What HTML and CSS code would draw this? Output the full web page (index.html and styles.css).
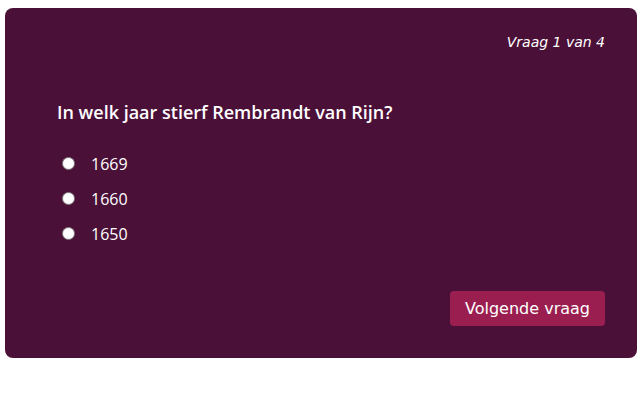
FILE: index.html
```html
<!DOCTYPE html>
<html lang="nl">
<head>
	<meta charset="UTF-8">
	<meta name="viewport" content="width=device-width, initial-scale=1.0">
	<title>Quiz</title>
	<link rel="stylesheet" href="styles.css">
</head>
<body>
	<!-- Quiz card -->
	<div class="quiz">
		<div class="counter">Vraag 1 van 4</div>
		<h2 class="question">In welk jaar stierf Rembrandt van Rijn?</h2>

		<div class="answers">
			<label class="answer"><input type="radio" name="q1" value="1669"><span>1669</span></label>
			<label class="answer"><input type="radio" name="q1" value="1660"><span>1660</span></label>
			<label class="answer"><input type="radio" name="q1" value="1650"><span>1650</span></label>
		</div>

		<div class="actions">
			<button id="next-btn">Volgende vraag</button>
		</div>
	</div>
</body>
</html>
```

FILE: styles.css
```css
body {
	margin: 0;
	padding: 0;
	background-color: white;
	font-family: "Open Sans", Arial, sans-serif;
}

/* Card */
.quiz {
	margin: 8px 5px;
	padding: 24px 32px 32px 52px;
	background-color: #4b1038;
	color: white;
	border-radius: 8px;
	display: flex;
	flex-direction: column;
}

.counter {
	text-align: right;
	font-family: "DejaVu Sans", Verdana, sans-serif;
	font-style: italic;
	font-size: 14px;
	line-height: 20px;
}

.question {
	margin: 48px 0 0 0;
	font-size: 18px;
	font-weight: 600;
	line-height: 24px;
}

/* Answer list */
.answers {
	margin-top: 22px;
	display: flex;
	flex-direction: column;
}

.answer {
	display: flex;
	align-items: center;
	height: 35px;
	font-size: 16px;
}

.answer input {
	appearance: none;
	-webkit-appearance: none;
	width: 13px;
	height: 13px;
	margin: 0 16px 0 5px;
	border-radius: 50%;
	border: 1px solid #8a8a8a;
	background: radial-gradient(circle at 50% 45%, #ffffff 55%, #e4e4e4 100%);
	box-sizing: border-box;
}

.actions {
	margin-top: 40px;
	display: flex;
	justify-content: flex-end;
}

#next-btn {
	background-color: #9a1f50;
	color: white;
	border: none;
	border-radius: 4px;
	padding: 8px 15px;
	height: 35px;
	font-family: "DejaVu Sans", Verdana, sans-serif;
	font-size: 16px;
	cursor: pointer;
}
```
